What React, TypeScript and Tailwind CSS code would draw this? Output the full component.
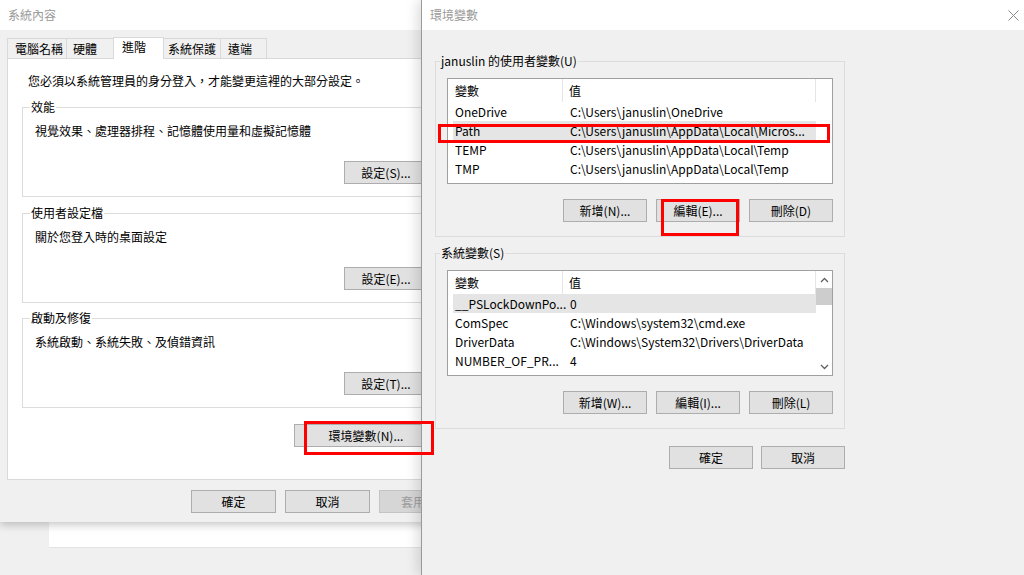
import React from 'react'

type Row = { name: string; value: string; selected?: boolean }

const userVars: Row[] = [
  { name: 'OneDrive', value: 'C:\\Users\\januslin\\OneDrive' },
  { name: 'Path', value: 'C:\\Users\\januslin\\AppData\\Local\\Micros...', selected: true },
  { name: 'TEMP', value: 'C:\\Users\\januslin\\AppData\\Local\\Temp' },
  { name: 'TMP', value: 'C:\\Users\\januslin\\AppData\\Local\\Temp' },
]

const systemVars: Row[] = [
  { name: '__PSLockDownPo...', value: '0', selected: true },
  { name: 'ComSpec', value: 'C:\\Windows\\system32\\cmd.exe' },
  { name: 'DriverData', value: 'C:\\Windows\\System32\\Drivers\\DriverData' },
  { name: 'NUMBER_OF_PR...', value: '4' },
]

const tabs = [
  { label: '電腦名稱', w: 'w-[60px]', pl: 'pl-[7px]' },
  { label: '硬體', w: 'w-[48px]', pl: 'pl-[6px]' },
  { label: '進階', w: 'w-[51px]', pl: 'pl-[8px]', active: true },
  { label: '系統保護', w: 'w-[58px]', pl: 'pl-[4px]' },
  { label: '遠端', w: 'w-[47px]', pl: 'pl-[7px]' },
]

function Btn({ label, className = '', disabled = false }: { label: string; className?: string; disabled?: boolean }) {
  return (
    <div
      className={`h-[23px] flex items-center justify-center border leading-4 ${
        disabled ? 'border-[#c4c4c4] bg-[#d6d6d6] text-[#9c9c9c]' : 'border-[#adadad] bg-[#e1e1e1] text-black'
      } ${className}`}
    >
      {label}
    </div>
  )
}

function Chevron({ up }: { up?: boolean }) {
  return (
    <svg width="9" height="6" viewBox="0 0 9 6" fill="none">
      <path d={up ? 'M1 5 L4.5 1.5 L8 5' : 'M1 1 L4.5 4.5 L8 1'} stroke="#606060" strokeWidth="1.3" />
    </svg>
  )
}

function VarList({ rows, scroll }: { rows: Row[]; scroll?: boolean }) {
  return (
    <div className="mt-[9px] h-[106px] border border-[#a0a0a0] bg-white flex overflow-hidden">
      <div className="w-[368px] flex flex-col overflow-hidden">
        {/* header */}
        <div className="h-[23px] shrink-0 flex">
          <div className="w-[115px] pl-[7px] flex items-center border-r border-[#e5e5e5]">變數</div>
          <div className="flex-1 pl-[6px] flex items-center border-r border-[#e5e5e5]">值</div>
        </div>
        <div className="pl-[5px] flex flex-col">
          {rows.map((r) => (
            <div key={r.name} className={`h-[19px] shrink-0 flex items-center ${r.selected ? 'bg-[#e5e5e5]' : ''}`}>
              <div className="w-[115px] pl-[2px] whitespace-nowrap overflow-hidden">{r.name}</div>
              <div className="flex-1 pl-[2px] whitespace-nowrap overflow-hidden">{r.value}</div>
            </div>
          ))}
        </div>
      </div>
      {scroll ? (
        <div className="w-[16px] flex flex-col bg-white">
          <div className="h-[17px] flex items-center justify-center">
            <Chevron up />
          </div>
          <div className="h-[17px] bg-[#cdcdcd]"></div>
          <div className="flex-1"></div>
          <div className="h-[17px] flex items-center justify-center">
            <Chevron />
          </div>
        </div>
      ) : (
        <div className="flex-1"></div>
      )}
    </div>
  )
}

function VarGroup({ title, rows, buttons, scroll, className = '' }: { title: string; rows: Row[]; buttons: string[]; scroll?: boolean; className?: string }) {
  return (
    <fieldset className={`border border-[#dcdcdc] ${className}`}>
      <legend className="ml-[4px] px-[1px] leading-4">{title}</legend>
      <div className="px-[11px] pb-[14px]">
        <VarList rows={rows} scroll={scroll} />
        <div className="mt-[15px] flex justify-end gap-[9px]">
          {buttons.map((b) => (
            <Btn key={b} label={b} className="w-[84px]" />
          ))}
        </div>
      </div>
    </fieldset>
  )
}

function SettingGroup({ title, text, button, className = '' }: { title: string; text: string; button: string; className?: string }) {
  return (
    <fieldset className={`border border-[#dcdcdc] mr-[14px] ${className}`}>
      <legend className="ml-[7px] px-[1px] leading-4">{title}</legend>
      <div className="pl-[12px] pr-[20px] pb-[12px]">
        <div className="mt-[8px] leading-4">{text}</div>
        <div className="mt-[22px] flex justify-end">
          <Btn label={button} className="w-[84px]" />
        </div>
      </div>
    </fieldset>
  )
}

export default function App() {
  return (
    <div className="relative w-[1024px] h-[575px] overflow-hidden bg-[#f0f0f0] text-[12px] text-black font-['Noto_Sans_CJK_TC','Noto_Sans',sans-serif]">
      {/* window behind */}
      <div className="absolute left-[49px] top-[480px] w-[380px] h-[68px] bg-white border-b border-[#e3e3e3]"></div>

      {/* 系統內容 dialog */}
      <div className="absolute left-0 top-0 w-[471px] h-[522px] bg-[#f0f0f0] flex flex-col shadow-[0_3px_8px_rgba(0,0,0,0.22)]">
        <div className="h-[30px] shrink-0 bg-white flex items-center pl-2 text-[#9a9a9a]">系統內容</div>
        <div className="px-[7px] pt-[7px] flex flex-col">
          {/* tabs */}
          <div className="h-[21px] flex items-end">
            {tabs.map((t) =>
              t.active ? (
                <div
                  key={t.label}
                  className={`${t.w} ${t.pl} h-[22px] -mb-px -ml-px relative z-10 bg-white border border-b-0 border-[#d9d9d9] flex items-start pt-[1px] leading-4`}
                >
                  {t.label}
                </div>
              ) : (
                <div
                  key={t.label}
                  className={`${t.w} ${t.pl} h-[20px] -ml-px first:ml-0 bg-[#f0f0f0] border border-b-0 border-[#d9d9d9] flex items-center leading-4`}
                >
                  {t.label}
                </div>
              )
            )}
          </div>

          {/* tab panel */}
          <div className="h-[422px] bg-white border border-[#d9d9d9] pt-[14px] pl-[14px] flex flex-col">
            <div className="ml-[6px] leading-4">您必須以系統管理員的身分登入，才能變更這裡的大部分設定。</div>
            <SettingGroup className="mt-[10px]" title="效能" text="視覺效果、處理器排程、記憶體使用量和虛擬記憶體" button="設定(S)..." />
            <SettingGroup className="mt-[8px]" title="使用者設定檔" text="關於您登入時的桌面設定" button="設定(E)..." />
            <SettingGroup className="mt-[7px]" title="啟動及修復" text="系統啟動、系統失敗、及偵錯資訊" button="設定(T)..." />
            <div className="mt-[16px] flex justify-end pr-[25px]">
              <Btn label="環境變數(N)..." className="w-[144px]" />
            </div>
          </div>

          {/* footer */}
          <div className="mt-[10px] flex justify-start pl-[184px] gap-[9px]">
            <Btn label="確定" className="w-[85px]" />
            <Btn label="取消" className="w-[85px]" />
            <Btn label="套用" className="w-[68px]" disabled />
          </div>
        </div>
      </div>

      {/* 環境變數 dialog */}
      <div className="absolute left-[421px] top-0 w-[603px] h-[575px] bg-[#f0f0f0] border-l border-[#9a9a9a] flex flex-col shadow-[-3px_0_12px_rgba(0,0,0,0.15)]">
        <div className="h-[30px] shrink-0 bg-white flex items-center justify-between pl-2 pr-[5px] text-[#9a9a9a]">
          <span>環境變數</span>
          <svg width="11" height="11" viewBox="0 0 11 11" fill="none">
            <path d="M0.5 0.5 L10.5 10.5 M10.5 0.5 L0.5 10.5" stroke="#8a8a8a" strokeWidth="1" />
          </svg>
        </div>
        <div className="w-[410px] ml-[13px] flex flex-col">
          <VarGroup
            className="mt-[23px]"
            title="januslin 的使用者變數(U)"
            rows={userVars}
            buttons={['新增(N)...', '編輯(E)...', '刪除(D)']}
          />
          <VarGroup
            className="mt-[8px]"
            title="系統變數(S)"
            rows={systemVars}
            scroll
            buttons={['新增(W)...', '編輯(I)...', '刪除(L)']}
          />
          <div className="mt-[17px] flex justify-end gap-[8px]">
            <Btn label="確定" className="w-[84px]" />
            <Btn label="取消" className="w-[84px]" />
          </div>
        </div>
      </div>

      {/* red annotation boxes */}
      <div className="absolute left-[438px] top-[124px] w-[392px] h-[19px] border-[3px] border-[#ff0000]"></div>
      <div className="absolute left-[661px] top-[199px] w-[78px] h-[37px] border-[3px] border-[#ff0000]"></div>
      <div className="absolute left-[304px] top-[421px] w-[130px] h-[34px] border-[3px] border-[#ff0000]"></div>
    </div>
  )
}
